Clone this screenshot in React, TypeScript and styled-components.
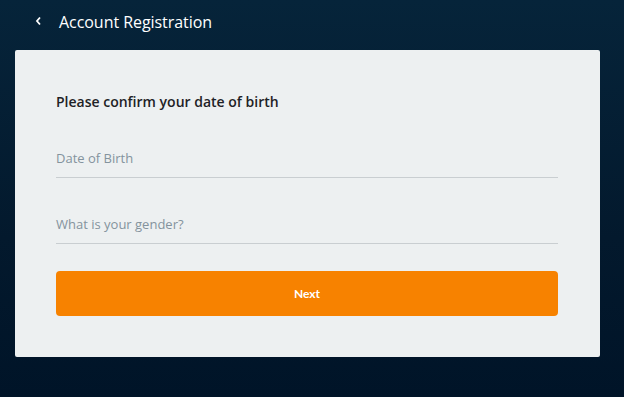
import React from "react";
import styled, { createGlobalStyle } from "styled-components";

const Global = createGlobalStyle`
  html, body { margin: 0; padding: 0; }
  body {
    width: 624px;
    height: 397px;
    overflow: hidden;
    background: linear-gradient(180deg, #06243a 0%, #03192d 60%, #001428 100%);
    font-family: "Open Sans", "Noto Sans", sans-serif;
  }
`;

const Page = styled.div`
  display: flex;
  flex-direction: column;
  padding: 0 24px 0 15px;
  height: 397px;
  box-sizing: border-box;
`;

const Header = styled.header`
  height: 42px;
  display: flex;
  align-items: center;
  gap: 16px;
  padding-left: 18px;
  color: #ffffff;
  box-sizing: border-box;
`;

const BackButton = styled.button`
  background: none;
  border: none;
  padding: 0;
  margin: 0;
  width: 10px;
  height: 12px;
  display: flex;
  align-items: center;
  justify-content: center;
  color: #ffffff;
  cursor: pointer;
`;

const Title = styled.h1`
  margin: 0;
  font-size: 16px;
  font-weight: 400;
  letter-spacing: -0.05px;
  line-height: 20px;
  margin-top: 1px;
`;

const Card = styled.main`
  margin-top: 8px;
  background: #edf0f1;
  border-radius: 2px;
  padding: 42px 42px 41px 41px;
  display: flex;
  flex-direction: column;
`;

const Heading = styled.h2`
  margin: 0 0 25px;
  font-size: 14px;
  line-height: 20px;
  font-weight: 600;
  color: #1e2226;
`;

const Field = styled.div<{ $gap?: number }>`
  height: 41px;
  box-sizing: border-box;
  border-bottom: 1px solid #c9ced1;
  display: flex;
  align-items: center;
  padding-top: 1px;
  margin-bottom: ${(p) => p.$gap ?? 25}px;
  font-size: 13px;
  color: #84939d;
`;

const NextButton = styled.button`
  height: 45px;
  border: none;
  border-radius: 4px;
  background: #f78200;
  color: #ffffff;
  font-family: "Lato", "Open Sans", sans-serif;
  font-weight: 700;
  font-size: 12px;
  cursor: pointer;
`;

export default function App() {
  return (
    <>
      <Global />
      <Page>
        <Header>
          <BackButton aria-label="Back">
            <svg width="7" height="10" viewBox="0 0 7 10">
              <path d="M5 1.5 L2 5 L5 8.5" fill="none" stroke="#fff" strokeWidth="1.8" />
            </svg>
          </BackButton>
          <Title>Account Registration</Title>
        </Header>
        <Card>
          <Heading>Please confirm your date of birth</Heading>
          <Field>Date of Birth</Field>
          <Field $gap={27}>What is your gender?</Field>
          <NextButton>Next</NextButton>
        </Card>
      </Page>
    </>
  );
}
